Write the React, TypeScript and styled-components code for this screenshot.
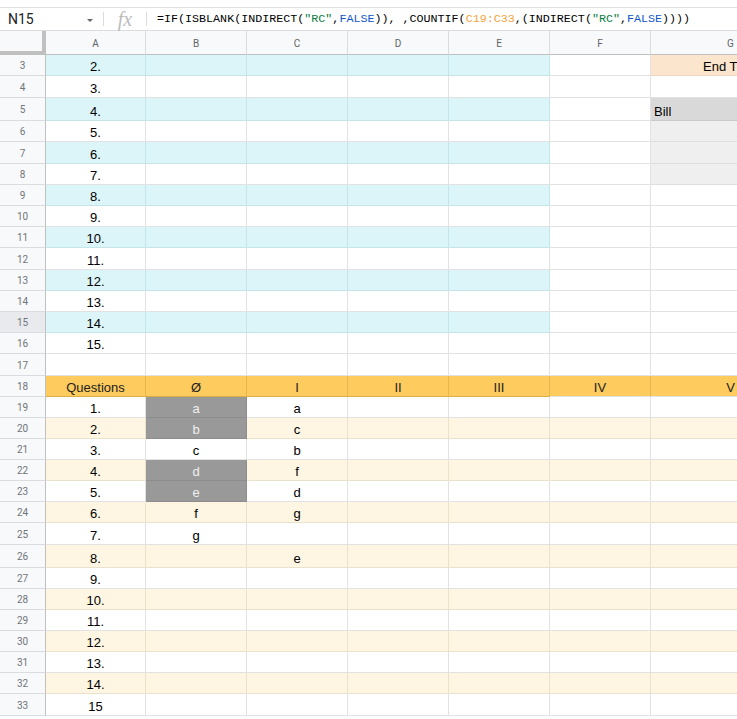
import React from 'react'
import styled, { createGlobalStyle } from 'styled-components'

const GlobalStyle = createGlobalStyle`
    html, body {
        margin: 0;
        padding: 0;
        background: #fff;
    }
    body {
        font-family: 'Liberation Sans', Arial, sans-serif;
        overflow: hidden;
    }
`

const CYAN = '#dcf5f9'
const CYAN_LINE = '#c6e5ea'
const YELLOW = '#fef6e3'
const YELLOW_LINE = '#ebe2cd'
const ORANGE = '#fdcb5e'
const ORANGE_LINE = '#e6b650'
const GRID = '#e2e2e3'
const DARK = '#999999'

const colWidths = [100, 101, 101, 101, 101, 101, 160]
const colNames = ['A', 'B', 'C', 'D', 'E', 'F', 'G']

const rowHeights: Record<number, number> = {
    3: 21, 4: 22, 5: 23, 6: 21, 7: 22,
    8: 21, 9: 21, 10: 21, 11: 21, 12: 22, 13: 21, 14: 21, 15: 21, 16: 21,
    17: 22, 18: 21,
    19: 21, 20: 21, 21: 21, 22: 21, 23: 21, 24: 21, 25: 22, 26: 23,
    27: 21, 28: 21, 29: 21, 30: 21, 31: 21, 32: 21, 33: 22,
}

type Align = 'left' | 'center' | 'right'

type CellDef = {
    text?: string
    bg?: string
    color?: string
    align?: Align
    line?: string
    bottom?: string
}

const answersB: Record<number, [string, boolean]> = {
    19: ['a', true], 20: ['b', true], 21: ['c', false], 22: ['d', true],
    23: ['e', true], 24: ['f', false], 25: ['g', false],
}
const answersC: Record<number, string> = {
    19: 'a', 20: 'c', 21: 'b', 22: 'f', 23: 'd', 24: 'g', 26: 'e',
}
const headers = ['Questions', 'Ø', 'I', 'II', 'III', 'IV', 'V']

function cellsFor(row: number): CellDef[] {
    const cells: CellDef[] = colNames.map(() => ({}))

    if (row >= 3 && row <= 16) {
        const striped = row % 2 === 1
        for (let c = 0; c < 5; c++) {
            if (striped) cells[c] = { bg: CYAN, line: CYAN_LINE }
        }
        cells[0].text = `${row - 1}.`
        if (row === 3) cells[6] = { text: 'End Time', bg: '#fce5cd', line: '#eed6bf' }
        if (row === 5) cells[6] = { text: 'Bill', bg: '#d9d9d9', align: 'left', line: '#c9c9c9' }
        if (row >= 6 && row <= 8) cells[6] = { bg: '#efefef', line: '#dedede' }
    }

    if (row === 18) {
        return headers.map((h, i) => ({
            text: h,
            bg: ORANGE,
            line: ORANGE_LINE,
            bottom: i < 5 ? '#e0ad45' : GRID,
            color: '#222',
        }))
    }

    if (row >= 19) {
        const striped = row % 2 === 0
        for (let c = 0; c < 7; c++) {
            if (striped) cells[c] = { bg: YELLOW, line: YELLOW_LINE }
        }
        cells[0].text = row === 33 ? '15' : `${row - 18}.`
        const b = answersB[row]
        if (b) {
            cells[1].text = b[0]
            if (b[1]) cells[1] = { text: b[0], bg: DARK, line: '#8d8d8d', color: '#f0f0f0' }
        }
        if (answersC[row]) cells[2].text = answersC[row]
    }

    return cells
}

type Token = { text: string; tone?: 'plain' | 'str' | 'bool' | 'ref' }

const formula: Token[] = [
    { text: '=IF(ISBLANK(INDIRECT(' },
    { text: '"RC"', tone: 'str' },
    { text: ',' },
    { text: 'FALSE', tone: 'bool' },
    { text: ')), ,COUNTIF(' },
    { text: 'C19:C33', tone: 'ref' },
    { text: ',(INDIRECT(' },
    { text: '"RC"', tone: 'str' },
    { text: ',' },
    { text: 'FALSE', tone: 'bool' },
    { text: '))))' },
]

const toneColors = {
    plain: '#000000',
    str: '#0b8043',
    bool: '#1155cc',
    ref: '#f6a33b',
}

const rows = Array.from({ length: 31 }, (_, i) => i + 3)

const App: React.FC = () => {
    return (
        <Page>
            <GlobalStyle />
            <TopStrip />
            <FormulaBar>
                <NameBox>
                    <span>N15</span>
                    <Caret />
                </NameBox>
                <Divider />
                <Fx>fx</Fx>
                <Divider />
                <FormulaText>
                    {formula.map((t, i) => (
                        <Tok key={i} $tone={t.tone ?? 'plain'}>{t.text}</Tok>
                    ))}
                </FormulaText>
            </FormulaBar>
            <Sheet>
                <HeaderRow>
                    <Corner />
                    {colNames.map((n, i) => (
                        <ColHeader key={n} $width={colWidths[i]}>{n}</ColHeader>
                    ))}
                </HeaderRow>
                {rows.map((r) => (
                    <Row key={r} $height={rowHeights[r]}>
                        <RowHeader $active={r === 15}>{r}</RowHeader>
                        {cellsFor(r).map((c, i) => (
                            <Cell
                                key={i}
                                $width={colWidths[i]}
                                $bg={c.bg}
                                $line={c.line}
                                $bottom={c.bottom}
                                $color={c.color}
                                $align={c.align ?? 'center'}
                            >
                                {c.text}
                            </Cell>
                        ))}
                    </Row>
                ))}
            </Sheet>
        </Page>
    )
}

const Page = styled.div`
    width: 737px;
    height: 719px;
    overflow: hidden;
    background: #fff;
`

const TopStrip = styled.div`
    height: 7px;
    border-bottom: 1px solid #e1e1e1;
`

const FormulaBar = styled.div`
    height: 22px;
    display: flex;
    align-items: center;
    border-bottom: 1px solid #dadce0;
    white-space: nowrap;
`

const NameBox = styled.div`
    width: 103px;
    box-sizing: border-box;
    padding: 0 10px 0 8px;
    display: flex;
    align-items: center;
    justify-content: space-between;
    font-family: Roboto, 'Liberation Sans', sans-serif;
    font-size: 14px;
    color: #202124;
`

const Caret = styled.span`
    width: 0;
    height: 0;
    margin-top: 3px;
    border-left: 3px solid transparent;
    border-right: 3px solid transparent;
    border-top: 3px solid #666;
`

const Divider = styled.span`
    width: 1px;
    height: 14px;
    background: #dadce0;
`

const Fx = styled.span`
    width: 42px;
    text-align: center;
    font-family: 'Liberation Serif', serif;
    font-style: italic;
    font-size: 20px;
    line-height: 20px;
    color: #bcbcbc;
`

const FormulaText = styled.div`
    padding-left: 10px;
    font-family: 'Liberation Mono', 'DejaVu Sans Mono', monospace;
    font-size: 11.7px;
    color: #000;
`

const Tok = styled.span<{ $tone: keyof typeof toneColors }>`
    color: ${p => toneColors[p.$tone]};
`

const Sheet = styled.div`
    display: flex;
    flex-direction: column;
    width: max-content;
`

const HeaderRow = styled.div`
    display: flex;
    height: 24px;
`

const Corner = styled.div`
    width: 46px;
    box-sizing: border-box;
    background: #f8f9fa;
    border-right: 4px solid #c0c0c0;
    border-bottom: 4px solid #c0c0c0;
`

const ColHeader = styled.div<{ $width: number }>`
    width: ${p => p.$width}px;
    box-sizing: border-box;
    display: flex;
    align-items: center;
    justify-content: center;
    padding-top: 1px;
    background: #f8f9fa;
    border-right: 1px solid #dadce0;
    border-bottom: 1px solid #c0c0c0;
    font-family: Roboto, 'Liberation Sans', sans-serif;
    font-size: 10px;
    color: #5f6368;
`

const Row = styled.div<{ $height: number }>`
    display: flex;
    height: ${p => p.$height}px;
`

const RowHeader = styled.div<{ $active?: boolean }>`
    width: 46px;
    flex-shrink: 0;
    box-sizing: border-box;
    display: flex;
    align-items: center;
    justify-content: center;
    padding-top: 1px;
    background: ${p => (p.$active ? '#e8eaed' : '#f8f9fa')};
    border-right: 1px solid #c0c0c0;
    border-bottom: 1px solid #dadce0;
    font-family: Roboto, 'Liberation Sans', sans-serif;
    font-size: 10px;
    color: #70757a;
`

const justify = { left: 'flex-start', center: 'center', right: 'flex-end' }

const Cell = styled.div<{
    $width: number
    $bg?: string
    $line?: string
    $bottom?: string
    $color?: string
    $align: Align
}>`
    width: ${p => p.$width}px;
    flex-shrink: 0;
    box-sizing: border-box;
    display: flex;
    align-items: flex-end;
    justify-content: ${p => justify[p.$align]};
    padding: 0 3px 0;
    background: ${p => p.$bg ?? '#fff'};
    border-right: 1px solid ${p => p.$line ?? GRID};
    border-bottom: 1px solid ${p => p.$bottom ?? p.$line ?? GRID};
    font-size: 13px;
    line-height: 16px;
    color: ${p => p.$color ?? '#000'};
    white-space: nowrap;
`

export default App
